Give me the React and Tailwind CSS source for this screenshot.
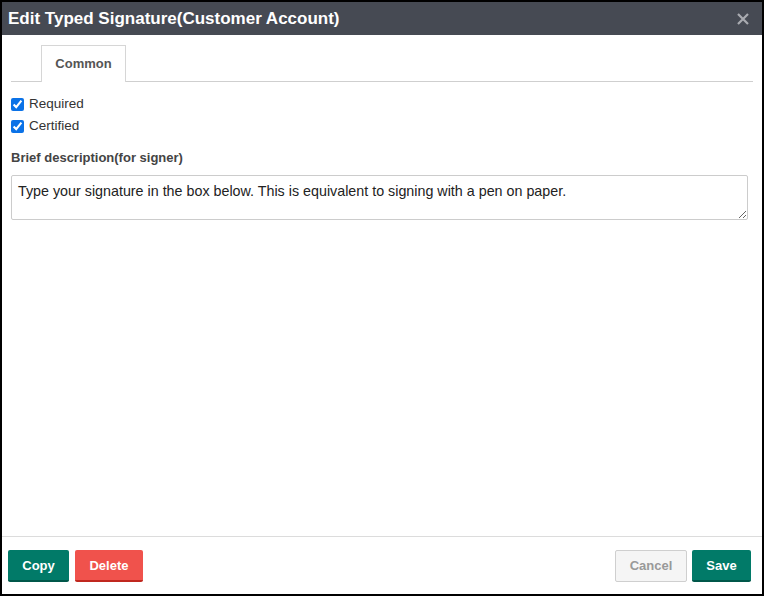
import React from "react";

export default function App() {
  return (
    <div
      className="w-[764px] h-[596px] border-2 border-black bg-white flex flex-col"
      style={{ fontFamily: '"Liberation Sans", Arial, sans-serif' }}
    >
      <div className="h-[33px] bg-[#464a53] flex items-center justify-between pl-[6px] pr-[13px] shrink-0">
        <span className="text-white font-bold text-[17px]">Edit Typed Signature(Customer Account)</span>
        <svg width="12" height="12" viewBox="0 0 12 12" className="block">
          <path d="M1 1 L11 11 M11 1 L1 11" stroke="#a9abb0" strokeWidth="2.2" strokeLinecap="butt" />
        </svg>
      </div>
      <div className="flex-1 px-[9px] pt-[10px]">
        <div className="border-b border-[#cfcfcf] flex">
          <div className="ml-[30px] w-[85px] h-[37px] border border-b-0 border-[#d6d6d6] bg-white -mb-px flex items-center justify-center text-[13px] font-bold text-[#555]">
            Common
          </div>
        </div>
        <div className="pt-[11px] flex flex-col">
          <label className="flex items-center h-[22px] text-[13.5px] text-[#333]">
            <input type="checkbox" defaultChecked className="w-[13px] h-[13px] m-0 mr-[5px] accent-[#0b72e7]" />
            Required
          </label>
          <label className="flex items-center h-[22px] text-[13.5px] text-[#333]">
            <input type="checkbox" defaultChecked className="w-[13px] h-[13px] m-0 mr-[5px] accent-[#0b72e7]" />
            Certified
          </label>
        </div>
        <div className="mt-[11px] text-[13px] font-bold text-[#444]">Brief description(for signer)</div>
        <textarea
          className="mt-[7px] w-[737px] h-[45px] border border-[#ccc] rounded-[2px] px-[6px] py-[5px] text-[14.3px] text-[#222] block outline-none"
          style={{ fontFamily: '"Liberation Sans", Arial, sans-serif' }}
          defaultValue="Type your signature in the box below. This is equivalent to signing with a pen on paper."
        />
      </div>
      <div className="border-t border-[#dcdcdc] h-[58px] shrink-0 flex items-start justify-between pl-[6px] pr-[11px] pt-[13px]">
        <div className="flex gap-[6px]">
          <button className="h-[32px] w-[61px] pt-[1px] bg-[#017a68] border-b-2 border-[#00574a] rounded-[2px] text-white font-bold text-[13px]">Copy</button>
          <button className="h-[32px] w-[68px] pt-[1px] bg-[#f0524c] border-b-2 border-[#c0281f] rounded-[2px] text-white font-bold text-[13px]">Delete</button>
        </div>
        <div className="flex gap-[5px]">
          <button className="h-[32px] w-[72px] bg-[#f5f5f5] border border-[#cfcfcf] rounded-[2px] text-[#999] font-bold text-[13px]">Cancel</button>
          <button className="h-[32px] w-[59px] pt-[1px] bg-[#017a68] border-b-2 border-[#00574a] rounded-[2px] text-white font-bold text-[13px]">Save</button>
        </div>
      </div>
    </div>
  );
}
